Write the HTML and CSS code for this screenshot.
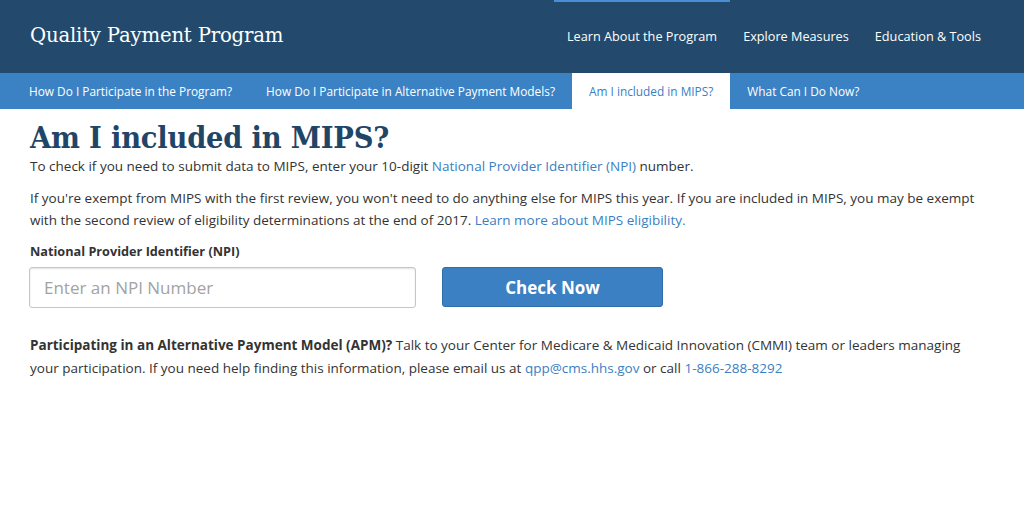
FILE: index.html
```html
<!DOCTYPE html>
<html lang="en">
<head>
<meta charset="utf-8">
<title>Am I included in MIPS?</title>
<link rel="stylesheet" href="styles.css">
</head>
<body>
<header class="topbar">
  <div class="brand">Quality Payment Program</div>
  <nav class="mainnav">
    <a class="mainnav-item is-current" href="#">Learn About the Program</a>
    <a class="mainnav-item" href="#">Explore Measures</a>
    <a class="mainnav-item" href="#">Education &amp; Tools</a>
  </nav>
</header>
<nav class="subnav">
  <a class="subnav-item" href="#">How Do I Participate in the Program?</a>
  <a class="subnav-item" href="#">How Do I Participate in Alternative Payment Models?</a>
  <a class="subnav-item is-active" href="#">Am I included in MIPS?</a>
  <a class="subnav-item" href="#">What Can I Do Now?</a>
</nav>
<main class="content">
  <h1 class="title">Am I included in MIPS?</h1>
  <p class="intro">To check if you need to submit data to MIPS, enter your 10-digit <a href="#">National Provider Identifier (NPI)</a> number.</p>
  <p class="text">If you're exempt from MIPS with the first review, you won't need to do anything else for MIPS this year. If you are included in MIPS, you may be exempt with the second review of eligibility determinations at the end of 2017. <a href="#">Learn more about MIPS eligibility.</a></p>
  <form class="npi-form">
    <label class="npi-label" for="npi">National Provider Identifier (NPI)</label>
    <div class="npi-row">
      <input class="npi-input" id="npi" type="text" placeholder="Enter an NPI Number">
      <button class="npi-button" type="button">Check Now</button>
    </div>
  </form>
  <p class="text apm"><strong>Participating in an Alternative Payment Model (APM)?</strong> Talk to your Center for Medicare &amp; Medicaid Innovation (CMMI) team or leaders managing your participation. If you need help finding this information, please email us at <a href="#">qpp@cms.hhs.gov</a> or call <a href="#">1-866-288-8292</a></p>
</main>
</body>
</html>
```
FILE: styles.css
```css
* { box-sizing: border-box; }
html, body { margin: 0; padding: 0; background: #fff; }
body {
  font-family: "Open Sans", "Liberation Sans", sans-serif;
  color: #333;
  width: 1024px;
}
a { color: #3a80c3; text-decoration: none; }

.topbar {
  height: 73px;
  background: #234a6c;
  display: flex;
  align-items: stretch;
  justify-content: space-between;
  padding: 0 0 0 30px;
}
.brand {
  font-family: "DejaVu Serif", "Liberation Serif", serif;
  color: #fff;
  font-size: 19.7px;
  display: flex;
  align-items: center;
  letter-spacing: -0.2px;
  padding-bottom: 2px;
}
.mainnav {
  display: flex;
  align-items: stretch;
  padding-right: 30px;
}
.mainnav-item {
  color: #fff;
  font-size: 12.7px;
  display: flex;
  align-items: center;
  padding: 0 13px 4px;
  border-top: 2px solid transparent;
}
.mainnav-item.is-current { border-top-color: #4a8fd6; }

.subnav {
  height: 36px;
  background: #3b82c4;
  display: flex;
  align-items: stretch;
  padding-left: 12px;
}
.subnav-item {
  color: #fff;
  font-size: 11.85px;
  display: flex;
  align-items: center;
  padding: 0 17px;
}
.subnav-item.is-active { background: #fff; color: #3a80c3; }

.content { padding: 0 39px 0 30px; }
.title {
  font-family: "DejaVu Serif Condensed", "DejaVu Serif", "Liberation Serif", serif;
  font-stretch: condensed;
  font-weight: bold;
  color: #1f4567;
  font-size: 30.4px;
  line-height: 36px;
  margin: 10px 0 0 0;
  letter-spacing: -0.2px;
}
.intro { font-size: 13.5px; line-height: 22px; margin: 0 0 10px 0; }
.text { font-size: 13.5px; line-height: 22px; margin: 0; }
.npi-form { margin: 10px 0 0 0; }
.npi-label {
  display: block;
  font-size: 12.7px;
  font-weight: bold;
  line-height: 20px;
  margin-bottom: 6px;
}
.npi-row { display: flex; gap: 26px; align-items: flex-start; }
.npi-input {
  width: 387px;
  height: 41px;
  margin-left: -1px;
  border: 1px solid #c6c6c6;
  border-radius: 3px;
  padding: 0 14px;
  font-family: "Open Sans", "Liberation Sans", sans-serif;
  font-size: 17px;
  color: #333;
  box-shadow: inset 0 1px 2px rgba(0,0,0,0.12);
}
.npi-input::placeholder { color: #a3a3a3; }
.npi-button {
  width: 221px;
  height: 40px;
  background: #3a80c2;
  border: 1px solid #2f6ea8;
  border-radius: 3px;
  color: #fff;
  font-family: "Open Sans", "Liberation Sans", sans-serif;
  font-size: 17px;
  font-weight: bold;
}
.apm { margin-top: 26px; line-height: 23px; }
.apm strong { font-weight: bold; }
```
